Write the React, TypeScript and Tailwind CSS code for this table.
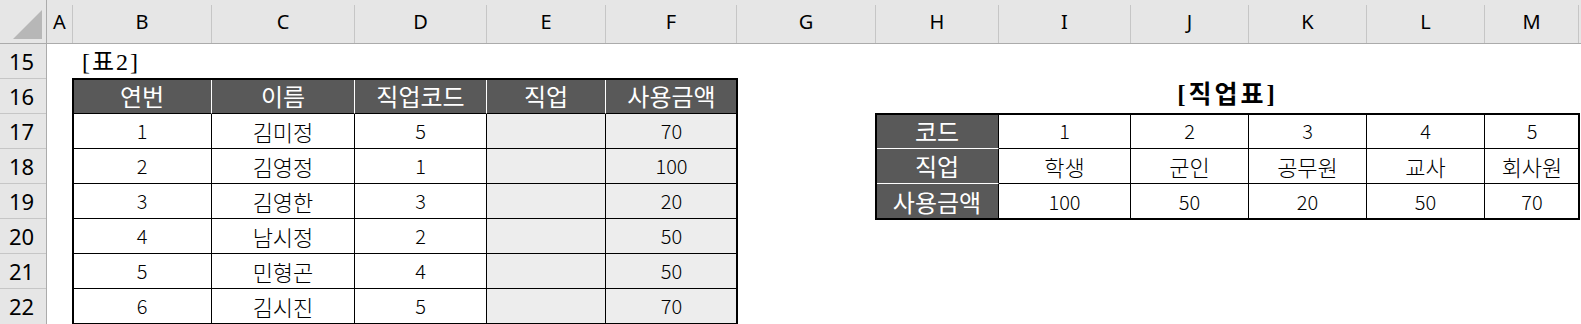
const columns = [
  { label: "A", w: "w-[26px]" },
  { label: "B", w: "w-[139px]" },
  { label: "C", w: "w-[143px]" },
  { label: "D", w: "w-[132px]" },
  { label: "E", w: "w-[119px]" },
  { label: "F", w: "w-[131px]" },
  { label: "G", w: "w-[139px]" },
  { label: "H", w: "w-[123px]" },
  { label: "I", w: "w-[132px]" },
  { label: "J", w: "w-[118px]" },
  { label: "K", w: "w-[118px]" },
  { label: "L", w: "w-[118px]" },
  { label: "M", w: "w-[94px]" },
];

const rowNums = [15, 16, 17, 18, 19, 20, 21, 22];

const people = [
  ["1", "김미정", "5", "70"],
  ["2", "김영정", "1", "100"],
  ["3", "김영한", "3", "20"],
  ["4", "남시정", "2", "50"],
  ["5", "민형곤", "4", "50"],
  ["6", "김시진", "5", "70"],
];

const jobTable = [
  { head: "코드", cells: ["1", "2", "3", "4", "5"] },
  { head: "직업", cells: ["학생", "군인", "공무원", "교사", "회사원"] },
  { head: "사용금액", cells: ["100", "50", "20", "50", "70"] },
];

const uiFont = "font-['Noto_Sans','Open_Sans',sans-serif]";
const headFont = "font-['Noto_Sans_CJK_KR',sans-serif]";

// numbers in the cells are a bit narrower than the hangul
function txt(v: string) {
  return /^\d+$/.test(v)
    ? "text-[20px] font-['Noto_Sans_CJK_KR',sans-serif] font-light"
    : "text-[22px] font-['Noto_Sans_CJK_KR',sans-serif] font-light";
}

export default function App() {
  return (
    <div className="w-[1581px] h-[324px] bg-white overflow-hidden text-black">
      {/* column letters */}
      <div className={`flex h-[44px] bg-[#e6e6e6] border-b border-[#ababab] ${uiFont}`}>
        <div className="w-[47px] shrink-0 border-r border-[#ababab] flex items-end justify-end pr-[3px] pb-[3px]">
          <svg width="30" height="30" viewBox="0 0 30 30">
            <polygon points="29,0 29,29 0,29" fill="#b7b7b7" />
          </svg>
        </div>
        {columns.map((c) => (
          <div
            key={c.label}
            className={`${c.w} shrink-0 flex items-center justify-center text-[20px] mt-[5px] border-r border-[#c6c6c6]`}
          >
            <span className="-mt-[5px]">{c.label}</span>
          </div>
        ))}
      </div>

      <div className="flex">
        {/* row numbers */}
        <div className={`w-[47px] shrink-0 bg-[#e6e6e6] border-r border-[#ababab] flex flex-col ${uiFont}`}>
          {rowNums.map((n) => (
            <div
              key={n}
              className="h-[35px] flex items-center justify-center pr-[3px] text-[22px] border-b border-[#c6c6c6] last:border-b-0"
            >
              {n}
            </div>
          ))}
        </div>

        {/* sheet */}
        <div className="grid grid-cols-[26px_139px_143px_132px_119px_131px_139px_123px_132px_118px_118px_118px_94px] grid-rows-[35px_35px_35px_35px_35px_35px_35px_35px]">
          <div className="col-start-2 row-start-1 flex items-center pl-[9px] text-[24px] tracking-[2px] font-['Liberation_Serif','Noto_Sans_CJK_KR',serif]">
            [표2]
          </div>

          {/* 표2 */}
          <div className="col-start-2 col-span-5 row-start-2 row-span-7 grid grid-cols-[139px_143px_132px_119px_131px] grid-rows-[35px_35px_35px_35px_35px_35px_35px] outline-2 outline-black -outline-offset-1">
            {["연번", "이름", "직업코드", "직업", "사용금액"].map((h, i) => (
              <div
                key={h}
                className={`bg-[#595959] text-white text-[24px] flex items-center justify-center border-b border-black ${headFont} ${i < 4 ? "border-r border-r-white" : ""}`}
              >
                {h}
              </div>
            ))}
            {people.map((p) => (
              <div key={p[0]} className="contents">
                <div className={`flex items-center justify-center border-r border-b border-black ${txt(p[0])}`}>{p[0]}</div>
                <div className={`flex items-center justify-center border-r border-b border-black ${txt(p[1])}`}>{p[1]}</div>
                <div className={`flex items-center justify-center border-r border-b border-black ${txt(p[2])}`}>{p[2]}</div>
                <div className="bg-[#ededed] border-r border-b border-black" />
                <div className={`bg-[#ededed] flex items-center justify-center border-b border-black ${txt(p[3])}`}>{p[3]}</div>
              </div>
            ))}
          </div>

          {/* 직업표 */}
          <div className="col-start-8 col-span-6 row-start-2 flex items-end justify-center pb-[1px] text-[25px] tracking-[3px] font-bold font-['Liberation_Serif','Noto_Sans_CJK_KR',serif]">
            [직업표]
          </div>
          <div className="col-start-8 col-span-6 row-start-3 row-span-3 grid grid-cols-[123px_132px_118px_118px_118px_94px] grid-rows-[35px_35px_35px] outline-2 outline-black -outline-offset-1">
            {jobTable.map((r, ri) => (
              <div key={r.head} className="contents">
                <div
                  className={`bg-[#595959] text-white text-[24px] flex items-center justify-center border-r border-black ${headFont} ${ri < 2 ? "border-b border-b-white" : ""}`}
                >
                  {r.head}
                </div>
                {r.cells.map((c, ci) => (
                  <div
                    key={ci}
                    className={`flex items-center justify-center border-black ${txt(c)} ${ci < 4 ? "border-r" : ""} ${ri < 2 ? "border-b" : ""}`}
                  >
                    {c}
                  </div>
                ))}
              </div>
            ))}
          </div>
        </div>
      </div>
    </div>
  );
}
